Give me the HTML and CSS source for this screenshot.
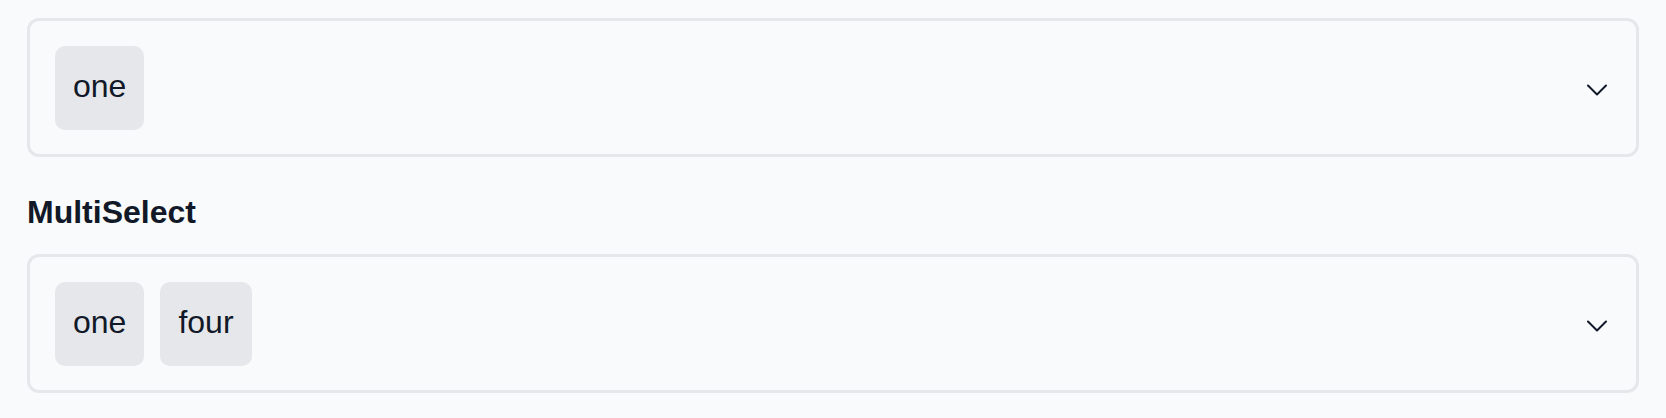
FILE: index.html
```html
<!DOCTYPE html>
<html>
<head>
<meta charset="utf-8">
<link rel="stylesheet" href="styles.css">
</head>
<body>
<div class="page">
  <div class="select">
    <div class="chips">
      <span class="chip">one</span>
    </div>
    <svg class="chevron" width="20" height="12" viewBox="0 0 20 12" fill="none"><path d="M1 1.5 L10 10.5 L19 1.5" stroke="#111827" stroke-width="2" stroke-linecap="round" stroke-linejoin="round"/></svg>
  </div>
  <h2 class="label">MultiSelect</h2>
  <div class="select">
    <div class="chips">
      <span class="chip">one</span>
      <span class="chip">four</span>
    </div>
    <svg class="chevron" width="20" height="12" viewBox="0 0 20 12" fill="none"><path d="M1 1.5 L10 10.5 L19 1.5" stroke="#111827" stroke-width="2" stroke-linecap="round" stroke-linejoin="round"/></svg>
  </div>
</div>
</body>
</html>
```
FILE: styles.css
```css
html, body {
  margin: 0;
  padding: 0;
  background: #f9fafb;
}
body {
  font-family: "Liberation Sans", Arial, sans-serif;
  color: #111827;
}
.page {
  padding: 18px 27px;
}
.select {
  display: flex;
  align-items: center;
  justify-content: space-between;
  box-sizing: border-box;
  height: 139px;
  border: 3px solid #e5e7eb;
  border-radius: 12px;
  padding: 0 29px 0 25px;
}
.chips {
  display: flex;
  gap: 16px;
}
.chip {
  background: #e5e7eb;
  border-radius: 10px;
  font-size: 32px;
  line-height: 48px;
  padding: 16px 18px 20px;
}
.chevron {
  display: block;
  margin-top: 4px;
}
.label {
  margin: 31px 0 18px;
  font-size: 32px;
  line-height: 48px;
  font-weight: 700;
}
```
